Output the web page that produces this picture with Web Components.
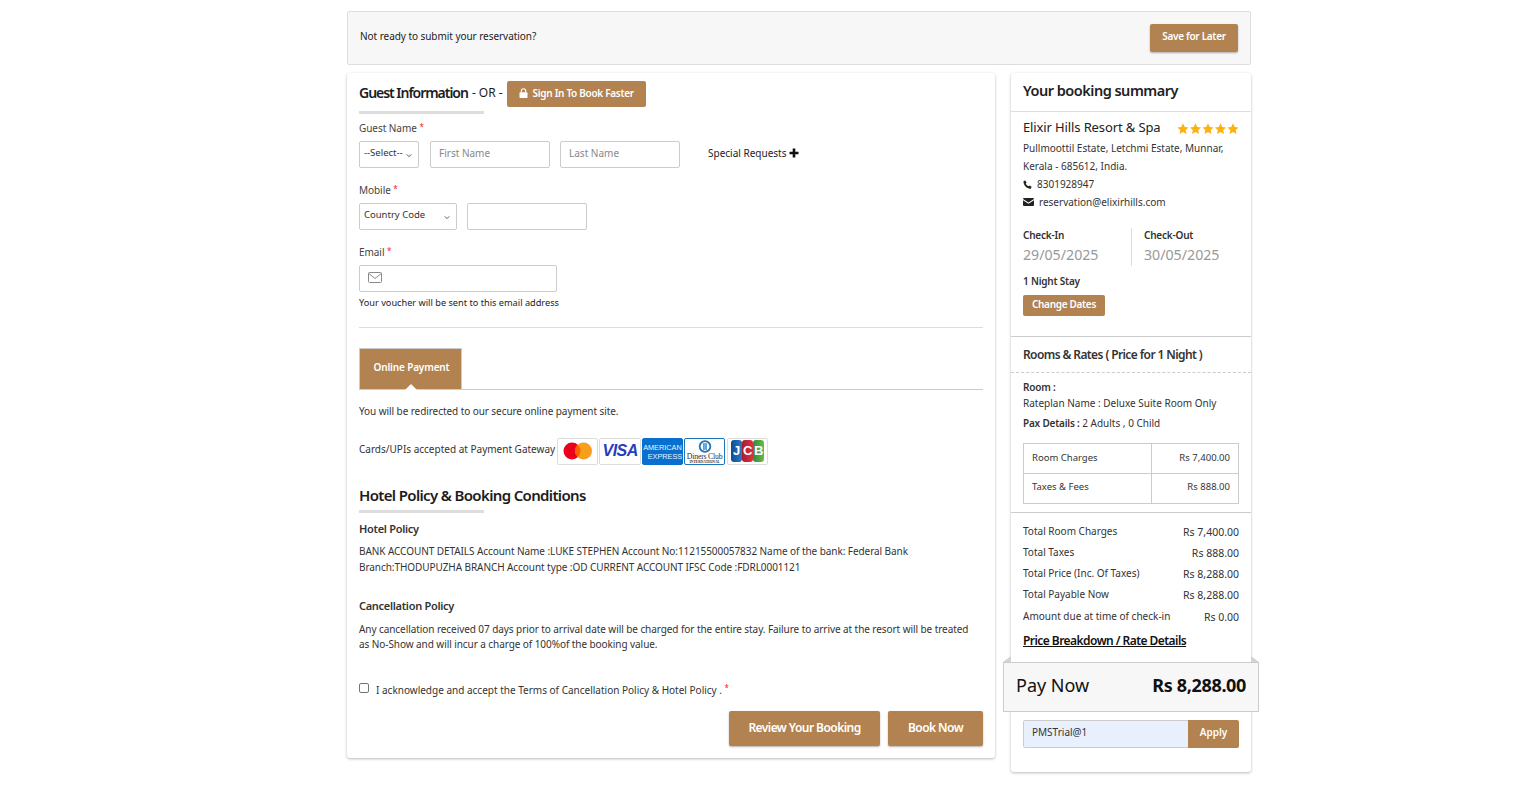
<!DOCTYPE html>
<html lang="en"><head><meta charset="utf-8"><title>Booking</title>
<style>
html,body{margin:0;padding:0;background:#fff}
body{font-family:"Noto Sans","Open Sans",sans-serif;color:#333;font-size:10px}
</style></head><body>
<booking-page>
  <save-bar></save-bar>
  <guest-card slot="left"></guest-card>
  <summary-card slot="right"></summary-card>
</booking-page>
<script>
const BROWN='#b28350';
const base=`:host,*{box-sizing:border-box}`;
function def(name,html){
  customElements.define(name,class extends HTMLElement{
    constructor(){super();const t=document.createElement('template');t.innerHTML=html;this.attachShadow({mode:'open'}).appendChild(t.content.cloneNode(true));}
  });
}
def('booking-page',`<style>${base}
:host{display:block;width:904px;margin-left:347px;padding:11px 0 29px}
.cols{display:flex;justify-content:space-between;align-items:flex-start;margin-top:8px}
</style><slot></slot><div class="cols"><slot name="left"></slot><slot name="right"></slot></div>`);
def('brown-btn',`<style>${base}
:host{display:inline-flex;align-items:center;justify-content:center;background:${BROWN};color:#fff;border-radius:2px;font-weight:600;font-size:10px;white-space:nowrap;letter-spacing:-.3px;padding-bottom:var(--pb,2px)}
</style><slot></slot>`);
def('save-bar',`<style>${base}
:host{display:flex;height:54px;align-items:center;justify-content:space-between;background:#f7f7f7;border:1px solid #ddd;border-radius:2px;padding:0 12px;color:#222;font-size:10px;letter-spacing:-.05px}
span{padding-bottom:4px}
brown-btn{width:88px;height:28px;box-shadow:0 1px 2px rgba(0,0,0,.3);--pb:4px}
</style><span>Not ready to submit your reservation?</span><brown-btn>Save for Later</brown-btn>`);
def('section-head',`<style>${base}
:host{display:block;font-weight:600;color:#1c1c1c}
.b{width:125px;height:3px;background:#ddd;margin-top:var(--gap,4px)}
.r{display:flex;align-items:center;min-height:26px;padding-bottom:var(--hb,0)}
</style><div class="r"><slot></slot></div><div class="b"></div>`);
def('text-box',`<style>${base}
:host{display:flex;align-items:center;height:27px;border:1px solid #ccc;border-radius:2px;background:#fff;font-size:10px;color:#888;padding:0 8px 4px}
</style><slot></slot>`);
def('select-box',`<style>${base}
:host{display:flex;align-items:center;justify-content:space-between;height:27px;border:1px solid #ccc;border-radius:2px;background:#fff;font-size:9.5px;color:#333;padding:0 6px 4px 4px}
svg{width:6px;height:5px;margin-top:5px}
</style><slot></slot><svg viewBox="0 0 8 6"><path d="M1 1.500l3 3 3-3" fill="none" stroke="#444" stroke-width="1.200"/></svg>`);
def('field-label',`<style>${base}
:host{display:block;font-size:10px;color:#444;line-height:14px;height:14px;letter-spacing:-.05px}
i{color:#e22;font-style:normal;font-size:8px;line-height:0;vertical-align:2px}
</style><slot></slot> <i>*</i>`);
def('card-logos',`<style>${base}
:host{display:flex;gap:1px;align-items:center}
.c{width:41px;height:27px;background:#fff;border:1px solid #ddd;border-radius:2px;display:flex;align-items:center;justify-content:center;overflow:hidden}
.visa{font:italic 800 16px "Liberation Sans",sans-serif;color:#1f3ec0;letter-spacing:-.5px}
.am{background:#0a70cf;border-color:#0a70cf;color:#e8f3ff;font:400 7.300px/8px "Liberation Sans",sans-serif;display:block;padding:4px 0 0;white-space:nowrap}
.am div{height:9px;line-height:9px;text-align:left}.am div+div{text-align:right}
.di{border-color:#1b75bb;display:block;text-align:center}
.di svg{display:block;margin:1px auto 0}
.di div{font:7.800px/7px "Liberation Serif",serif;color:#333;white-space:nowrap;letter-spacing:-.2px}
.di small{display:block;font:3.600px/4px "Liberation Serif",serif;font-weight:700;letter-spacing:0}
.jcb{gap:0}
.jcb b{font:800 13px/22px "Liberation Sans",sans-serif;color:#fff;width:11px;height:22px;text-align:center;display:block;border-radius:3px}
</style>
<div class="c"><svg width="30" height="18" viewBox="0 0 30 18"><circle cx="9" cy="9" r="8.500" fill="#eb001b"/><circle cx="20.500" cy="9" r="8.500" fill="#f79e1b"/><path d="M14.750 2.700a8.500 8.500 0 0 1 0 12.600a8.500 8.500 0 0 1 0-12.600z" fill="#ff5f00"/></svg></div>
<div class="c" style="width:42px"><span class="visa">VISA</span></div>
<div class="c am"><div>AMERICAN</div><div>EXPRESS</div></div>
<div class="c di"><svg width="16" height="13" viewBox="0 0 16 13"><circle cx="8" cy="6.500" r="6.200" fill="#1b75bb"/><circle cx="8" cy="6.500" r="4.400" fill="#fff"/><rect x="6.300" y="3" width="1.300" height="7" fill="#1b75bb"/><rect x="8.400" y="3" width="1.300" height="7" fill="#1b75bb"/></svg><div>Diners Club<small>INTERNATIONAL</small></div></div>
<div class="c jcb" style="margin-left:1px"><b style="background:linear-gradient(90deg,#0e4c96,#2a7ac0)">J</b><b style="background:linear-gradient(90deg,#a51c30,#e0313f)">C</b><b style="background:linear-gradient(90deg,#2e8b3a,#6cbb4a)">B</b></div>`);
def('guest-card',`<style>${base}
:host{display:block;width:648px;height:685px;background:#fff;border-radius:3px;box-shadow:0 1px 3px rgba(0,0,0,.28);padding:8px 12px 0;color:#333;font-size:10px}
.gi{font-size:14px;letter-spacing:-1.030px;margin-top:-4px}
.or{font-weight:400;font-size:12px;margin:-3px 4px 0}
.sign{width:139px;height:26px;gap:5px}
.hp{font-size:15px;letter-spacing:-.65px;--hb:2px;--gap:1px}
.row{display:flex;align-items:center}
.sp{display:flex;align-items:center;gap:3px;color:#222;margin-left:28px;margin-top:-3px}
hr{border:0;border-top:1px solid #ddd;margin:0}
.tabs{border-bottom:1px solid #ccc;height:42px;margin-top:20px}
.tab{width:103px;height:41px;background:${BROWN};border:1px solid #ccc;border-bottom:0;color:#fff;font-weight:600;letter-spacing:-.15px;display:flex;align-items:center;justify-content:center;position:relative;padding:0 0 5px 2px}
.tab:after{content:"";position:absolute;left:45px;bottom:-1px;border:6px solid transparent;border-bottom-color:#fff;border-top:0}
h4{margin:0;font-size:11px;font-weight:600;color:#333;letter-spacing:-.3px;line-height:16px}
p{margin:0;line-height:16px;color:#333;letter-spacing:-.07px}
.btns{display:flex;justify-content:flex-end;gap:8px;margin-top:14px}
.btns brown-btn{height:35px;font-size:12px;letter-spacing:-.55px;box-shadow:0 1px 2px rgba(0,0,0,.3);--pb:1px}
.chk{display:flex;align-items:center;gap:7px;margin-top:31px;line-height:14px;height:14px}
.chk span.box{width:10px;height:10px;border:1px solid #767676;border-radius:2px;background:#fff;flex:none;margin-top:-3px}
.chk i{color:#e22;font-style:normal;font-size:8px;line-height:0;vertical-align:3px}
</style>
<section-head><span class="gi">Guest Information</span><span class="or">- OR -</span><brown-btn class="sign"><svg width="9" height="10" viewBox="0 0 9 10"><rect x=".5" y="4.200" width="8" height="5.800" rx=".8" fill="#fff"/><path d="M2.300 4.500V2.900a2.200 2.200 0 0 1 4.400 0v1.600" fill="none" stroke="#fff" stroke-width="1.100"/></svg>Sign In To Book Faster</brown-btn></section-head>
<field-label style="margin-top:7px">Guest Name</field-label>
<div class="row" style="margin-top:6px">
  <select-box style="width:60px">--Select--</select-box>
  <text-box style="width:120px;margin-left:11px">First Name</text-box>
  <text-box style="width:120px;margin-left:10px">Last Name</text-box>
  <div class="sp">Special Requests <svg width="10" height="10" viewBox="0 0 10 10"><path d="M3.700 .5h2.600v3.200h3.200v2.600H6.300v3.200H3.700V6.300H.5V3.700h3.200z" fill="#111"/></svg></div>
</div>
<field-label style="margin-top:15px">Mobile</field-label>
<div class="row" style="margin-top:6px">
  <select-box style="width:98px">Country Code</select-box>
  <text-box style="width:120px;margin-left:10px"></text-box>
</div>
<field-label style="margin-top:15px">Email</field-label>
<text-box style="width:198px;margin-top:6px"><svg width="14" height="11" viewBox="0 0 14 11" style="margin-top:1px"><rect x=".5" y=".5" width="13" height="10" rx="1" fill="none" stroke="#888"/><path d="M.8 1.500L7 6.500l6.200-5" fill="none" stroke="#888"/></svg></text-box>
<div style="margin-top:4px;line-height:14px;color:#222;font-size:9.200px">Your voucher will be sent to this email address</div>
<hr style="margin-top:17px">
<div class="tabs"><div class="tab">Online Payment</div></div>
<p style="margin-top:14px;line-height:15.500px">You will be redirected to our secure online payment site.</p>
<div class="row" style="margin-top:18px;gap:2px"><span style="padding-bottom:4px">Cards/UPIs accepted at Payment Gateway</span><card-logos></card-logos></div>
<section-head class="hp" style="margin-top:18px">Hotel Policy &amp; Booking Conditions</section-head>
<h4 style="margin-top:8px">Hotel Policy</h4>
<p style="margin-top:6px">BANK ACCOUNT DETAILS Account Name :LUKE STEPHEN Account No:11215500057832 Name of the bank: Federal Bank<br>Branch:THODUPUZHA BRANCH Account type :OD CURRENT ACCOUNT IFSC Code :FDRL0001121</p>
<h4 style="margin-top:23px">Cancellation Policy</h4>
<p style="margin-top:8px;line-height:15px">Any cancellation received 07 days prior to arrival date will be charged for the entire stay. Failure to arrive at the resort will be treated<br>as No-Show and will incur a charge of 100%of the booking value.</p>
<div class="chk"><span class="box"></span><span>I acknowledge and accept the Terms of Cancellation Policy &amp; Hotel Policy . <i>*</i></span></div>
<div class="btns"><brown-btn style="width:151px">Review Your Booking</brown-btn><brown-btn style="width:95px">Book Now</brown-btn></div>`);
def('total-row',`<style>${base}
:host{display:flex;justify-content:space-between;align-items:center;height:21px;font-size:10px;color:#333}
.v{font-size:10.500px;padding-top:3px}
</style><slot></slot><span class="v"><slot name="v"></slot></span>`);
def('pay-now',`<style>${base}
:host{display:flex;justify-content:space-between;align-items:center;height:50px;margin:0 -8px;padding:0 12px 4px 12px;background:#f7f7f7;border:1px solid #ccc;position:relative;color:#111;font-size:18px}
b{font-weight:700;letter-spacing:-.35px}
.t{position:absolute;top:-7px;width:0;height:0;border-bottom:6px solid #d4d4d4}
.l{left:-1px;border-left:8px solid transparent}.rr{right:-1px;border-right:8px solid transparent}
</style><i class="t l"></i><i class="t rr"></i><span>Pay Now</span><b>Rs 8,288.00</b>`);
def('summary-card',`<style>${base}
:host{display:block;width:240px;height:699px;background:#fff;border-radius:3px;box-shadow:0 1px 3px rgba(0,0,0,.28);color:#333;font-size:10px}
.h{height:39px;border-bottom:1px solid #ddd;padding:0 12px 4px;display:flex;align-items:center;font-size:14.500px;font-weight:600;color:#222;letter-spacing:-.5px}
.info{padding:5px 12px 0;height:225px;border-bottom:1px solid #ccc}
.nm{display:flex;justify-content:space-between;align-items:center;font-size:13px;letter-spacing:-.12px;color:#222;height:20px}
.st{display:flex;gap:0;margin-top:3px}
.ln{line-height:18px;color:#333}
.ic{display:flex;align-items:center;height:18px;gap:5px}
.dates{display:flex;margin-top:17px;height:38px}
.dates>div{width:108px;line-height:14px}
.dates>div+div{border-left:1px solid #ddd;padding-left:12px;width:100px}
.dates b,.st2{font-weight:600;letter-spacing:-.2px;color:#333}
.dates span{display:block;font-size:14.200px;color:#999;line-height:20px;margin-top:3px}
.cd{width:82px;height:21px;margin-top:7px;--pb:4px}
.rh{height:36px;border-bottom:1px dashed #ccc;padding:0 12px 1px;display:flex;align-items:center;font-size:12px;font-weight:600;letter-spacing:-.6px;color:#333}
.rm{padding:6px 12px 0;height:140px;border-bottom:1px solid #ccc;line-height:16px}
.rm b{font-weight:600;letter-spacing:-.2px}
.tb{display:grid;grid-template-columns:127px 1fr;grid-template-rows:29px 1fr;border:1px solid #ccc;margin-top:12px;height:61px;font-size:9.500px}
.tb div{display:flex;align-items:center;padding:0 8px 2px}
.tb div:nth-child(even){border-left:1px solid #ccc;justify-content:flex-end}
.tb div:nth-child(n+3){border-top:1px solid #ccc;padding-bottom:3px}
.tot{padding:7px 12px 0;height:149px}
.pb{font-size:12px;font-weight:600;color:#111;text-decoration:underline;letter-spacing:-.55px;margin-top:7px;line-height:16px}
.cp{display:flex;margin:8px 12px 0;height:28px;border-radius:2px;overflow:hidden}
.in{flex:1;background:#e8f0fe;border:1px solid #ccc;border-right:0;border-radius:2px 0 0 2px;display:flex;align-items:center;padding:0 8px 5px;color:#333}
.ap{width:51px;background:${BROWN};color:#fff;font-weight:600;display:flex;align-items:center;justify-content:center;padding-bottom:5px}
</style>
<div class="h">Your booking summary</div>
<div class="info">
<div class="nm"><span>Elixir Hills Resort &amp; Spa</span><span class="st"><svg width="62" height="11" viewBox="0 0 62 11"><defs><path id="s" d="M6 .3l1.700 3.600 3.900.5-2.900 2.700.8 3.900L6 9 2.500 11l.8-3.900L.4 4.400l3.900-.5z" fill="#fdb10e"/></defs><use href="#s"/><use href="#s" x="12.500"/><use href="#s" x="25"/><use href="#s" x="37.500"/><use href="#s" x="50"/></svg></span></div>
<div class="ln" style="margin-top:2px">Pullmoottil Estate, Letchmi Estate, Munnar,<br>Kerala - 685612, India.</div>
<div class="ic"><svg width="9" height="9" viewBox="0 0 9 9"><path d="M2.200.4l1.400 2-.9 1a5 5 0 0 0 2.900 2.900l1-.9 2 1.400-.6 1.700c-.1.200-.4.300-.7.300C3.700 8.500.5 5.300.5 1.700c0-.3.100-.6.300-.7z" fill="#222"/></svg><span>8301928947</span></div>
<div class="ic"><svg width="11" height="8" viewBox="0 0 11 8"><path d="M1 0h9a1 1 0 0 1 1 1L5.500 4.500 0 1a1 1 0 0 1 1-1zM0 2.300l5.500 3.400L11 2.300V7a1 1 0 0 1-1 1H1a1 1 0 0 1-1-1z" fill="#222"/></svg><span>reservation@elixirhills.com</span></div>
<div class="dates"><div><b>Check-In</b><span>29/05/2025</span></div><div><b>Check-Out</b><span>30/05/2025</span></div></div>
<div class="st2" style="margin-top:8px;line-height:14px">1 Night Stay</div>
<brown-btn class="cd">Change Dates</brown-btn>
</div>
<div class="rh">Rooms &amp; Rates ( Price for 1 Night )</div>
<div class="rm"><div><b>Room :</b></div><div>Rateplan Name : Deluxe Suite Room Only</div><div style="margin-top:4px"><b>Pax Details :</b> 2 Adults , 0 Child</div>
<div class="tb"><div>Room Charges</div><div>Rs 7,400.00</div><div>Taxes &amp; Fees</div><div>Rs 888.00</div></div></div>
<div class="tot">
<total-row>Total Room Charges<span slot="v">Rs 7,400.00</span></total-row>
<total-row>Total Taxes<span slot="v">Rs 888.00</span></total-row>
<total-row>Total Price (Inc. Of Taxes)<span slot="v">Rs 8,288.00</span></total-row>
<total-row>Total Payable Now<span slot="v">Rs 8,288.00</span></total-row>
<total-row style="margin-top:1px">Amount due at time of check-in<span slot="v">Rs 0.00</span></total-row>
<div class="pb">Price Breakdown / Rate Details</div>
</div>
<pay-now></pay-now>
<div class="cp"><div class="in">PMSTrial@1</div><div class="ap">Apply</div></div>`);
</script>
</body></html>
